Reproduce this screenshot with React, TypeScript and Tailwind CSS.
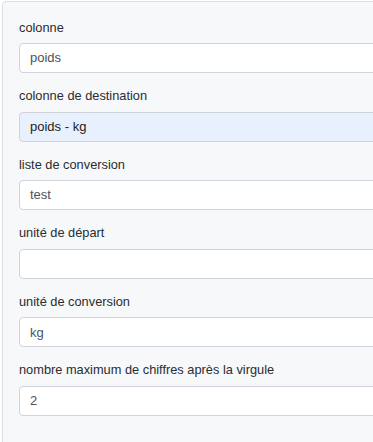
import React from "react";

const FIELDS = [
  { label: "colonne", value: "poids" },
  { label: "colonne de destination", value: "poids - kg", filled: true },
  { label: "liste de conversion", value: "test" },
  { label: "unité de départ", value: "" },
  { label: "unité de conversion", value: "kg" },
  { label: "nombre maximum de chiffres après la virgule", value: "2" },
];

export default function App() {
  return (
    <div
      className="w-[373px] h-[442px] overflow-hidden bg-white pl-[2px] pt-[1px]"
      style={{ fontFamily: '"Liberation Sans", Arial, sans-serif' }}
    >
      <div className="w-[420px] h-[480px] bg-[#f7f8fa] border border-[#dcdfe3] rounded-[4px] pl-4 pt-[15.5px]">
        {FIELDS.map((f) => (
          <div key={f.label} className="mb-[13.1px]">
            <label className="block text-[12.8px] leading-[19.5px] text-[#292d31] mb-[6px]">
              {f.label}
            </label>
            <div
              className={
                "h-[30px] flex items-center px-[10px] border border-[#ced4da] rounded-[4px] text-[13px] " +
                (f.filled ? "bg-[#e8f0fe] text-[#1c1f22]" : "bg-white text-[#4d5357]")
              }
            >
              {f.value}
            </div>
          </div>
        ))}
      </div>
    </div>
  );
}
